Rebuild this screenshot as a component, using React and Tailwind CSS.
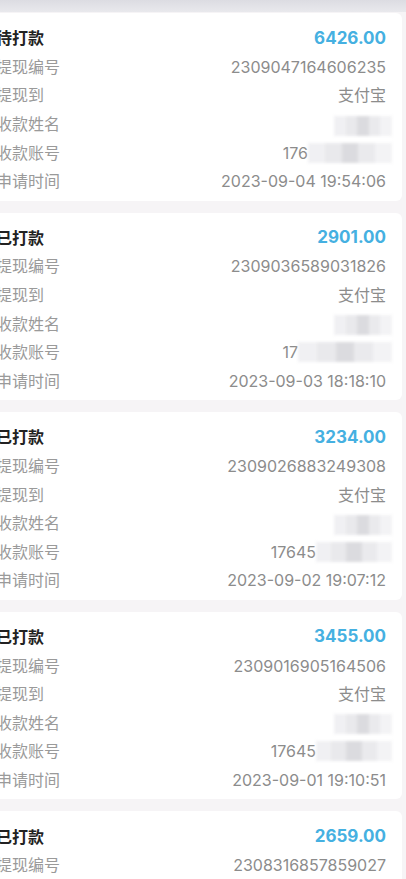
import React from 'react';

const records = [
  { status: '待打款', amount: '6426.00', no: '2309047164606235', to: '支付宝', acct: '176', blur: 84, time: '2023-09-04 19:54:06' },
  { status: '已打款', amount: '2901.00', no: '2309036589031826', to: '支付宝', acct: '17', blur: 94, time: '2023-09-03 18:18:10' },
  { status: '已打款', amount: '3234.00', no: '2309026883249308', to: '支付宝', acct: '17645', blur: 76, time: '2023-09-02 19:07:12' },
  { status: '已打款', amount: '3455.00', no: '2309016905164506', to: '支付宝', acct: '17645', blur: 76, time: '2023-09-01 19:10:51' },
  { status: '已打款', amount: '2659.00', no: '2308316857859027', to: '支付宝', acct: '17645', blur: 76, time: '2023-08-31 18:42:20' },
];

function Blur({ w }) {
  // mosaic-like blurred patch for hidden personal data
  return (
    <span className="inline-flex h-[20px] -mr-[6px] align-middle blur-[1.5px] opacity-75" style={{ width: w }}>
      <span className="flex-1 bg-[#ececef]" />
      <span className="flex-1 bg-[#e2e2e6]" />
      <span className="flex-1 bg-[#d0d0d5]" />
      <span className="flex-1 bg-[#e4e4e8]" />
      <span className="flex-1 bg-[#efeff2]" />
    </span>
  );
}

function Row({ label, children }) {
  return (
    <div className="flex items-center justify-between h-[28.6px] text-[16px]">
      <span className="text-[#9a9a9a] whitespace-nowrap">{label}</span>
      <span className="text-[#8c8c8c] whitespace-nowrap">{children}</span>
    </div>
  );
}

function Card({ r }) {
  return (
    <div className="bg-white rounded-[6px] -ml-[20px] mr-[4px] pl-4 pr-4 pt-[11px] pb-[5px]">
      <div className="flex items-center justify-between h-[28.6px] font-bold">
        <span className="text-[16px] text-[#222]">{r.status}</span>
        <span className="text-[17px] text-[#45b0e1]">{r.amount}</span>
      </div>
      <Row label="提现编号">{r.no}</Row>
      <Row label="提现到">{r.to}</Row>
      <Row label="收款姓名">
        <Blur w={58} />
      </Row>
      <Row label="收款账号">
        <span className="inline-flex items-center">
          {r.acct}
          <Blur w={r.blur} />
        </span>
      </Row>
      <Row label="申请时间">{r.time}</Row>
    </div>
  );
}

export default function App() {
  return (
    <div
      className="w-[406px] h-[879px] overflow-hidden bg-[#f6f4f6]"
      style={{ fontFamily: 'Inter, "Noto Sans CJK SC", sans-serif' }}
    >
      <div className="h-[12px] bg-gradient-to-b from-[#dcdce2] to-[#e9e9ed]" />
      <div className="flex flex-col gap-[12px] pt-px">
        {records.map((r) => (
          <Card key={r.no} r={r} />
        ))}
      </div>
    </div>
  );
}
